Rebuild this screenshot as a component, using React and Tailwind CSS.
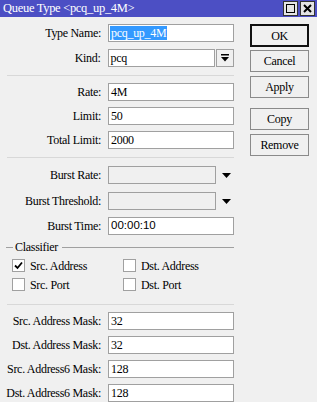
import React from 'react';

function Arrow() {
  return (
    <svg width="9" height="5" viewBox="0 0 9 5" className="ml-[6px]">
      <polygon points="0,0 9,0 4.5,5" fill="#000" />
    </svg>
  );
}

function Field({ label, value, mt, kind, selected, sans }) {
  const box =
    kind === 'disabled'
      ? 'w-[108px] bg-[#f0f0f0]'
      : kind === 'select'
      ? 'w-[108px] bg-white'
      : 'w-[126px] bg-white';
  return (
    <div className={`flex items-center h-[18px] ${mt}`}>
      <div className="w-[101px] text-right whitespace-nowrap">{label}</div>
      <div
        className={`ml-[7px] h-[18px] border border-[#a0a0a0] flex items-center pl-[1px] ${box} ${
          sans ? "font-['Liberation_Sans',sans-serif] text-[11.5px] tracking-normal" : ''
        }`}
      >
        {selected ? (
          <span className="bg-[#3399ff] text-white px-[1px] leading-[14px]">{value}</span>
        ) : (
          <span className="px-[1px]">{value}</span>
        )}
      </div>
      {kind === 'select' && (
        <div className="h-[18px] w-[18px] ml-[1px] border border-[#a0a0a0] bg-[#f0f0f0] flex items-center justify-center">
          <svg width="8" height="8" viewBox="0 0 8 8">
            <rect x="0" y="0" width="8" height="1.5" fill="#000" />
            <polygon points="0,3 8,3 4,7.5" fill="#000" />
          </svg>
        </div>
      )}
      {kind === 'disabled' && <Arrow />}
    </div>
  );
}

function Check({ label, checked }) {
  return (
    <div className="flex items-center w-[112px] h-[13px]">
      <div className="w-[13px] h-[13px] border border-[#a0a0a0] bg-white flex items-center justify-center">
        {checked && (
          <svg width="9" height="9" viewBox="0 0 9 9">
            <path d="M1 4.5 L3.5 7 L8 1.5" stroke="#000" strokeWidth="1.8" fill="none" />
          </svg>
        )}
      </div>
      <span className="ml-[5px] whitespace-nowrap">{label}</span>
    </div>
  );
}

function Sep({ mt }) {
  return <div className={`ml-[7px] w-[227px] h-0 border-t border-[#d8d8d8] ${mt}`} />;
}

function Btn({ children, mt, focus }) {
  return (
    <div
      className={`w-[59px] flex items-center justify-center bg-[#f0f0f0] ${mt} ${
        focus ? 'h-[23px] border-2 border-[#111]' : 'h-[22px] border border-[#8a8a8a]'
      }`}
    >
      {children}
    </div>
  );
}

export default function App() {
  return (
    <div className="w-[317px] h-[402px] bg-[#f0f0f0] overflow-hidden font-['Liberation_Serif',serif] text-[12px] tracking-[-0.3px] text-black leading-none">
      {/* Title bar */}
      <div className="h-[17px] bg-[#4c4fc4] flex items-center pl-[3px] pr-[2px]">
        <span className="text-white text-[12.5px]">Queue Type &lt;pcq_up_4M&gt;</span>
        <div className="ml-auto flex gap-[2px]">
          <div className="w-[15px] h-[15px] bg-[#e4e4e4] border border-[#333] flex items-center justify-center">
            <div className="w-[9px] h-[9px] border-[1.5px] border-black" />
          </div>
          <div className="w-[15px] h-[15px] bg-[#e4e4e4] border border-[#333] flex items-center justify-center">
            <svg width="9" height="9" viewBox="0 0 9 9">
              <path d="M1 1 L8 8 M8 1 L1 8" stroke="#000" strokeWidth="2" />
            </svg>
          </div>
        </div>
      </div>

      <div className="flex">
        {/* Form */}
        <div className="w-[234px]">
          <Field label="Type Name:" value="pcq_up_4M" mt="mt-[7px]" selected />
          <Field label="Kind:" value="pcq" mt="mt-[7px]" kind="select" />
          <Sep mt="mt-[8px]" />
          <Field label="Rate:" value="4M" mt="mt-[7px]" />
          <Field label="Limit:" value="50" mt="mt-[6px]" />
          <Field label="Total Limit:" value="2000" mt="mt-[6px]" />
          <Sep mt="mt-[8px]" />
          <Field label="Burst Rate:" value="" mt="mt-[8px]" kind="disabled" />
          <Field label="Burst Threshold:" value="" mt="mt-[8px]" kind="disabled" />
          <Field label="Burst Time:" value="00:00:10" mt="mt-[7px]" sans />

          {/* Classifier group */}
          <div className="mt-[6px] h-[12px] flex items-center">
            <div className="ml-[6px] w-[7px] border-t border-[#a0a0a0]" />
            <span className="ml-[2px]">Classifier</span>
            <div className="ml-[4px] flex-1 border-t border-[#a0a0a0]" />
          </div>
          <div className="mt-[6px] ml-[12px] flex">
            <Check label="Src. Address" checked />
            <Check label="Dst. Address" />
          </div>
          <div className="mt-[6px] ml-[12px] flex">
            <Check label="Src. Port" />
            <Check label="Dst. Port" />
          </div>
          <Sep mt="mt-[13px]" />
          <Field label="Src. Address Mask:" value="32" mt="mt-[7px]" />
          <Field label="Dst. Address Mask:" value="32" mt="mt-[6px]" />
          <Field label="Src. Address6 Mask:" value="128" mt="mt-[6px]" />
          <Field label="Dst. Address6 Mask:" value="128" mt="mt-[6px]" />
        </div>

        {/* Buttons */}
        <div className="ml-[16px] flex flex-col">
          <Btn mt="mt-[7px]" focus>OK</Btn>
          <Btn mt="mt-[3px]">Cancel</Btn>
          <Btn mt="mt-[4px]">Apply</Btn>
          <Btn mt="mt-[10px]">Copy</Btn>
          <Btn mt="mt-[4px]">Remove</Btn>
        </div>
      </div>
    </div>
  );
}
